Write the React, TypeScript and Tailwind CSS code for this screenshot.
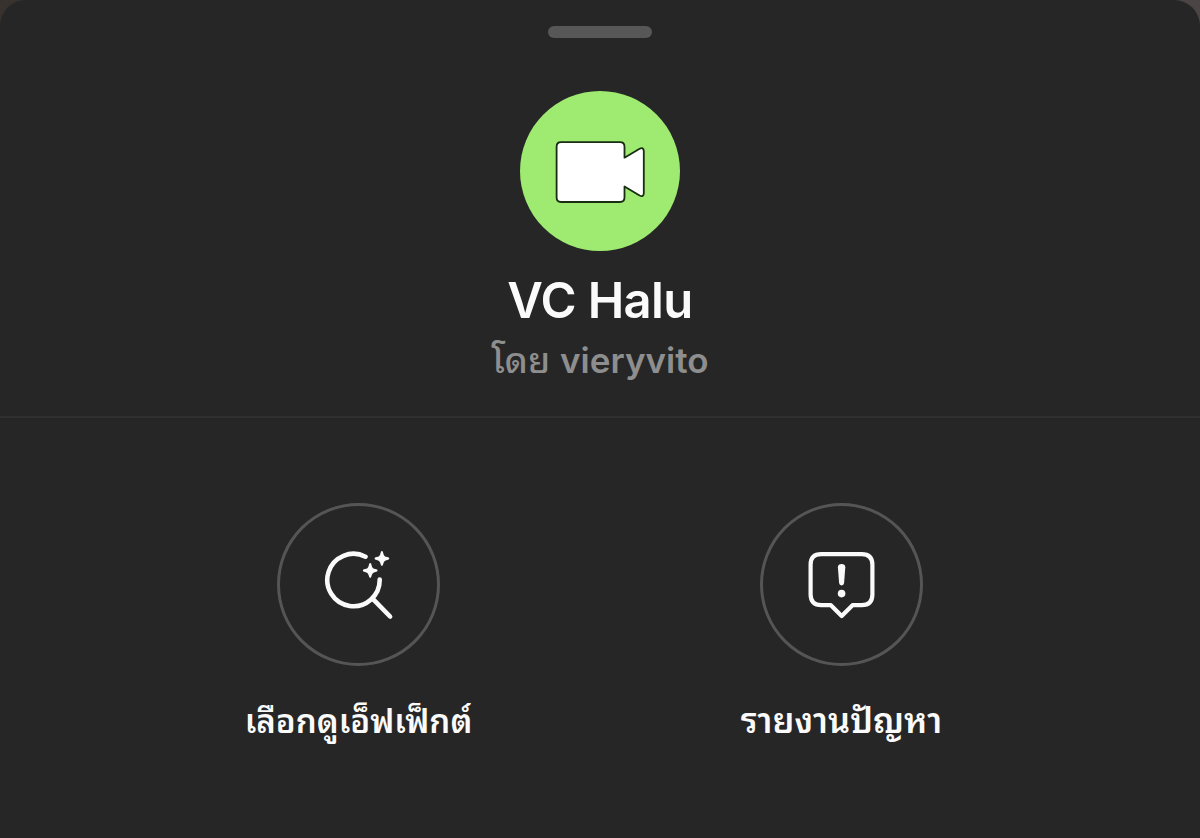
import type { ReactNode } from "react";

interface ActionProps {
  icon: ReactNode;
  label: string;
  labelClass: string;
}

export default function App() {
  return (
    <div className="h-[838px] w-[1200px] overflow-hidden bg-gradient-to-r from-[#38322f] to-[#4c4545] font-['Inter','Noto_Sans_Thai_Looped','Loma','Waree','Garuda','Noto_Sans_Thai',sans-serif]">
      <main className="flex h-full flex-col rounded-t-[26px] bg-[#262626]">
        <header className="flex h-[418px] shrink-0 flex-col items-center border-b-2 border-[#303030] pt-[26px]">
          <div className="h-3 w-[104px] shrink-0 rounded-full bg-[#575757]" />
          <div className="mt-[53px] size-40 shrink-0 rounded-full bg-[#9fea70]">
            <CameraIcon />
          </div>
          <h1 className="mt-5 text-[49px] leading-[60px] font-semibold tracking-[-0.6px] whitespace-nowrap text-[#fafafa]">
            VC Halu
          </h1>
          <p className="mt-[7px] flex items-baseline gap-[10px] text-[35px] leading-[44px] font-semibold whitespace-nowrap text-[#8e8e8e]">
            <span className="text-[35.5px] font-medium">โดย</span>
            <span>vieryvito</span>
          </p>
        </header>

        <section className="flex justify-center gap-[83px] pt-[85px]">
          <Action
            icon={<BrowseEffectsIcon />}
            label="เลือกดูเอ็ฟเฟ็กต์"
            labelClass="text-[33px]"
          />
          <Action
            icon={<ReportIcon />}
            label="รายงานปัญหา"
            labelClass="text-[34.5px]"
          />
        </section>
      </main>
    </div>
  );
}

function Action({ icon, label, labelClass }: ActionProps) {
  return (
    <button className="flex w-[400px] flex-col items-center" type="button">
      <span className="flex size-[163px] items-center justify-center rounded-full border-3 border-[#555]">
        {icon}
      </span>
      <span
        className={`mt-[31px] leading-[48px] font-semibold whitespace-nowrap text-[#fafafa] ${labelClass}`}
      >
        {label}
      </span>
    </button>
  );
}

function CameraIcon() {
  return (
    <svg className="size-40" viewBox="0 0 160 160" fill="white">
      <path
        d="M41 51.2H100Q104.5 51.2 104.5 55.7V66.7L119.6 57.8Q123.5 55.8 123.8 60V102.5Q123.5 106.3 119.6 104.5L104.5 95.5V106.5Q104.5 111 100 111H41Q36.6 111 36.6 106.5V55.7Q36.6 51.2 41 51.2Z"
        stroke="#192d12"
        strokeWidth="1.8"
        strokeLinejoin="round"
      />
    </svg>
  );
}

function BrowseEffectsIcon() {
  return (
    <svg
      className="size-[72px]"
      viewBox="0.3 0.3 72 72"
      fill="none"
      stroke="#fafafa"
      strokeWidth="4.6"
      strokeLinecap="round"
    >
      <path d="M42.8 8A26.2 26.2 0 1 0 57 30.9" />
      <path d="M50.6 50.6L67.4 67.8" />
      <g fill="#fafafa" stroke="none">
        <path d="M59.2 2.4Q60.3 2.4 60.6 4.5Q61.1 7.9 64.5 8.4Q66.6 8.7 66.6 9.8T64.5 11.2Q61.1 11.7 60.6 15.1Q60.3 17.2 59.2 17.2T57.8 15.1Q57.3 11.7 53.9 11.2Q51.8 10.9 51.8 9.8T53.9 8.4Q57.3 7.9 57.8 4.5Q58.1 2.4 59.2 2.4Z" />
        <path
          transform="translate(-11.7 12)"
          d="M59.2 2.4Q60.3 2.4 60.6 4.5Q61.1 7.9 64.5 8.4Q66.6 8.7 66.6 9.8T64.5 11.2Q61.1 11.7 60.6 15.1Q60.3 17.2 59.2 17.2T57.8 15.1Q57.3 11.7 53.9 11.2Q51.8 10.9 51.8 9.8T53.9 8.4Q57.3 7.9 57.8 4.5Q58.1 2.4 59.2 2.4Z"
        />
      </g>
    </svg>
  );
}

function ReportIcon() {
  return (
    <svg className="size-[72px]" viewBox="0.5 0.2 72 72" fill="none">
      <path
        d="M15.7 5.3H56.3Q66.9 5.3 66.9 15.9V45.8Q66.9 56.4 56.3 56.4H47L36.2 67.3L25.4 56.4H15.7Q5.1 56.4 5.1 45.8V15.9Q5.1 5.3 15.7 5.3Z"
        stroke="#fafafa"
        strokeWidth="4.2"
        strokeLinejoin="round"
      />
      <path
        d="M32.4 18.4Q32.6 15.2 36.1 15.2T39.8 18.4L38.6 34.3Q38.4 36.6 36.1 36.6T33.6 34.3Z"
        fill="#fafafa"
      />
      <circle cx="36.1" cy="44.8" r="3.8" fill="#fafafa" />
    </svg>
  );
}
